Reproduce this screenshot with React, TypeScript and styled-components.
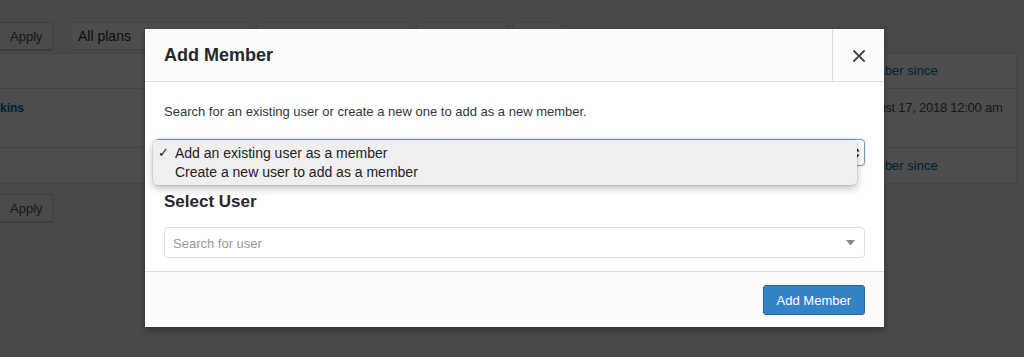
import { FC } from "react";
import styled, { createGlobalStyle } from "styled-components";

const GlobalStyle = createGlobalStyle`
  body {
    margin: 0;
    font-family: "Liberation Sans", Arial, sans-serif;
    background: #484848;
  }
`;

const App: FC = () => {
  return (
    <SPage>
      <GlobalStyle />

      <STableNav>
        <SButton>Apply</SButton>
        <SNavSelect $w={180}>All plans</SNavSelect>
        <SNavSelect $w={154} />
        <SNavSelect $w={91} />
        <SNavSelect $w={48} />
      </STableNav>

      <STable>
        <SRow $h={35} $pad={0} $head>
          <SNameCell />
          <SDateCell>
            <SLink>Member since</SLink>
          </SDateCell>
        </SRow>
        <SRow $h={59} $pad={10}>
          <SNameCell>
            <SStrong>kins</SStrong>
          </SNameCell>
          <SDateCell>August 17, 2018 12:00 am</SDateCell>
        </SRow>
        <SRow $h={35} $pad={0} $head>
          <SNameCell />
          <SDateCell>
            <SLink>Member since</SLink>
          </SDateCell>
        </SRow>
      </STable>

      <SBottomNav>
        <SButton>Apply</SButton>
      </SBottomNav>

      <SOverlay />

      <SModal>
        <SHeader>
          <STitle>Add Member</STitle>
          <SClose>
            <svg width="12" height="12" viewBox="0 0 12 12">
              <path d="M1 1 L11 11 M11 1 L1 11" stroke="#444" strokeWidth="1.8" strokeLinecap="round" />
            </svg>
          </SClose>
        </SHeader>

        <SBody>
          <SDesc>Search for an existing user or create a new one to add as a new member.</SDesc>

          <SSelectWrap>
            <SSelectBox>
              <SArrows>
                <svg width="7" height="12" viewBox="0 0 7 12">
                  <path d="M3.5 0.5 L6.5 4.5 L0.5 4.5 Z M3.5 11.5 L6.5 7.5 L0.5 7.5 Z" fill="#111" />
                </svg>
              </SArrows>
            </SSelectBox>
            <SPopup>
              <SOption>
                <SCheck>✓</SCheck>Add an existing user as a member
              </SOption>
              <SOption>
                <SCheck />Create a new user to add as a member
              </SOption>
            </SPopup>
          </SSelectWrap>

          <SSubTitle>Select User</SSubTitle>

          <SSearch>
            <SPlaceholder>Search for user</SPlaceholder>
            <svg width="9" height="6" viewBox="0 0 9 6">
              <path d="M0 0 L9 0 L4.5 5.5 Z" fill="#888" />
            </svg>
          </SSearch>
        </SBody>

        <SFooter>
          <SPrimary>Add Member</SPrimary>
        </SFooter>
      </SModal>
    </SPage>
  );
};

export default App;

const SPage = styled.div`
  position: relative;
  width: 1024px;
  height: 357px;
  overflow: hidden;
  background: #f1f1f1;
  color: #444;
  font-size: 13px;
`;
const STableNav = styled.div`
  display: flex;
  gap: 6px;
  padding-top: 22px;
  height: 28px;
  & > :first-child {
    margin-right: 11px;
  }
`;
const SButton = styled.div`
  box-sizing: border-box;
  height: 28px;
  width: 53px;
  padding-left: 10px;
  display: flex;
  align-items: center;
  background: #f7f7f7;
  border: 1px solid #ccc;
  border-left: none;
  border-radius: 0 3px 3px 0;
  box-shadow: 0 1px 0 #ccc;
  color: #555;
  font-size: 13px;
`;
const SNavSelect = styled.div<{ $w: number }>`
  box-sizing: border-box;
  width: ${(p) => p.$w}px;
  height: 28px;
  padding-left: 7px;
  display: flex;
  align-items: center;
  background: #fff;
  border: 1px solid #ddd;
  border-radius: 3px;
  color: #32373c;
  font-size: 14px;
`;
const STable = styled.div`
  margin-top: 3px;
  width: 1017px;
  background: #fff;
  border: 1px solid #e5e5e5;
  border-left: none;
  box-sizing: border-box;
`;
const SRow = styled.div<{ $h: number; $pad: number; $head?: boolean }>`
  display: flex;
  height: ${(p) => p.$h}px;
  align-items: ${(p) => (p.$head ? "center" : "flex-start")};
  padding-top: ${(p) => p.$pad}px;
  border-bottom: 1px solid #e1e1e1;
  box-sizing: border-box;
  font-size: 13px;
  line-height: 18px;
  &:last-child {
    border-bottom: none;
  }
`;
const SNameCell = styled.div`
  width: 856px;
  flex-shrink: 0;
`;
const SDateCell = styled.div`
  flex: 1;
  color: #555;
  white-space: nowrap;
  overflow: hidden;
  letter-spacing: -0.25px;
`;
const SLink = styled.span`
  color: #0073aa;
  letter-spacing: 0;
`;
const SStrong = styled.span`
  font-weight: bold;
  font-size: 12px;
  color: #0073aa;
`;
const SBottomNav = styled.div`
  padding-top: 10px;
`;
const SOverlay = styled.div`
  position: absolute;
  inset: 0;
  background: rgba(0, 0, 0, 0.7);
`;
const SModal = styled.div`
  position: absolute;
  left: 145px;
  top: 29px;
  width: 739px;
  height: 298px;
  background: #fff;
  box-shadow: 0 3px 6px rgba(0, 0, 0, 0.3);
  display: flex;
  flex-direction: column;
  color: #23282d;
`;
const SHeader = styled.div`
  display: flex;
  height: 52px;
  background: #fcfcfc;
  border-bottom: 1px solid #ddd;
`;
const STitle = styled.h1`
  flex: 1;
  margin: 0;
  padding-left: 19px;
  display: flex;
  align-items: center;
  font-size: 18px;
  font-weight: bold;
  color: #23282d;
`;
const SClose = styled.div`
  width: 51px;
  border-left: 1px solid #ddd;
  display: flex;
  align-items: center;
  justify-content: center;
  padding-top: 1px;
`;
const SBody = styled.div`
  flex: 1;
  padding: 21px 19px 0;
  display: flex;
  flex-direction: column;
`;
const SDesc = styled.p`
  margin: 0;
  font-size: 13px;
  line-height: 18px;
  color: #32373c;
`;
const SSelectWrap = styled.div`
  position: relative;
  margin-top: 18px;
  height: 27px;
`;
const SSelectBox = styled.div`
  box-sizing: border-box;
  height: 27px;
  margin-left: -9px;
  border: 1px solid #7e9cbf;
  border-radius: 4px;
  box-shadow: 0 0 2px rgba(91, 157, 217, 0.6);
  background: #fff;
  display: flex;
  align-items: center;
  justify-content: flex-end;
  padding-right: 4px;
`;
const SArrows = styled.div`
  display: flex;
`;
const SPopup = styled.div`
  position: absolute;
  left: -11px;
  top: 1px;
  width: 704px;
  height: 45px;
  box-sizing: border-box;
  padding-top: 3px;
  background: #efefef;
  border-radius: 5px;
  box-shadow: 0 3px 9px rgba(0, 0, 0, 0.28), 0 0 0 1px rgba(0, 0, 0, 0.06);
`;
const SOption = styled.div`
  display: flex;
  align-items: center;
  height: 19px;
  font-size: 14px;
  color: #222;
`;
const SCheck = styled.span`
  width: 22px;
  padding-left: 5px;
  box-sizing: border-box;
  font-size: 13px;
`;
const SSubTitle = styled.h2`
  margin: 25px 0 0;
  font-size: 17px;
  line-height: 22px;
  font-weight: bold;
  color: #23282d;
`;
const SSearch = styled.div`
  box-sizing: border-box;
  margin-top: 14px;
  height: 31px;
  border: 1px solid #ddd;
  border-radius: 4px;
  padding: 1px 9px 0 8px;
  display: flex;
  align-items: center;
  justify-content: space-between;
`;
const SPlaceholder = styled.span`
  font-size: 13px;
  color: #999;
`;
const SFooter = styled.div`
  height: 56px;
  box-sizing: border-box;
  border-top: 1px solid #ddd;
  background: #fcfcfc;
  display: flex;
  align-items: center;
  justify-content: flex-end;
  padding: 1px 19px 0;
`;
const SPrimary = styled.div`
  box-sizing: border-box;
  height: 30px;
  padding: 0 13px;
  display: flex;
  align-items: center;
  background: #3582c4;
  border: 1px solid #1f6aa3;
  border-radius: 3px;
  color: #fff;
  font-size: 13px;
`;
